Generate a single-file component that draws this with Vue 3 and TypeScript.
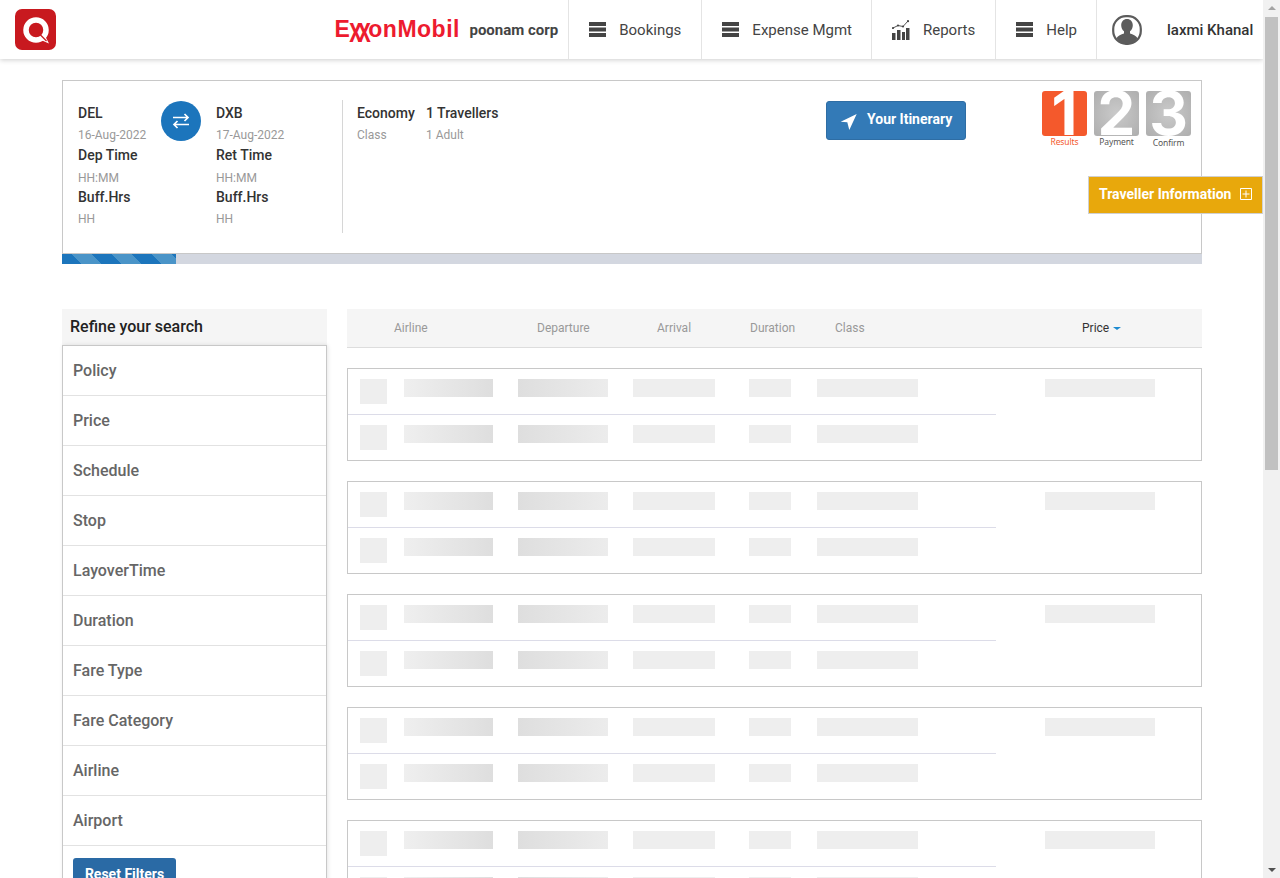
<script setup lang="ts">
interface NavItem {
  label: string;
  icon: 'bars' | 'chart';
}

const navItems: NavItem[] = [
  { label: 'Bookings', icon: 'bars' },
  { label: 'Expense Mgmt', icon: 'bars' },
  { label: 'Reports', icon: 'chart' },
  { label: 'Help', icon: 'bars' },
];

const legs = [
  { code: 'DEL', date: '16-Aug-2022', timeLabel: 'Dep Time' },
  { code: 'DXB', date: '17-Aug-2022', timeLabel: 'Ret Time' },
];

const steps = [
  { num: '1', label: 'Results', active: true },
  { num: '2', label: 'Payment', active: false },
  { num: '3', label: 'Confirm', active: false },
];

const filters = ['Policy', 'Price', 'Schedule', 'Stop', 'LayoverTime', 'Duration', 'Fare Type', 'Fare Category', 'Airline', 'Airport'];
const columns = ['Airline', 'Departure', 'Arrival', 'Duration', 'Class'];
const placeholders = [1, 2, 3, 4, 5];
</script>

<template>
  <div class="page">
    <header class="topbar">
      <svg class="brand" width="41" height="41" viewBox="0 0 41 41">
        <rect width="41" height="41" rx="7" fill="#c8191f" />
        <circle cx="21" cy="21" r="10" fill="none" stroke="#fff" stroke-width="5.5" />
        <path d="M23.500 30 L34 34.500 L28.500 24 Z" fill="#fff" />
        <path d="M23 23.500 L31.500 32" stroke="#c8191f" stroke-width="1.2" />
      </svg>
      <div class="corp">
        <span class="exxon">E<span class="xx">xx</span>onMobil</span>
        <span class="corp-name">poonam corp</span>
      </div>
      <nav class="nav">
        <a v-for="item in navItems" :key="item.label" class="nav-item">
          <svg v-if="item.icon === 'bars'" width="17" height="15" viewBox="0 0 17 15">
            <path d="M0 0h17v4H0zM0 5.500h17v4H0zM0 11h17v4H0z" fill="#444" />
          </svg>
          <svg v-else width="18" height="20" viewBox="0 0 18 20">
            <path d="M0 13h3.500v7H0zM5 10h3.500v10H5zM10 12h3v8h-3zM14 8h3.500v12H14z" fill="#444" />
            <path d="M1 8 L6 5.500 L11 6.500 L16 1" fill="none" stroke="#444" stroke-width="0.9" />
            <circle cx="1" cy="8" r="1.100" fill="#444" />
            <circle cx="6" cy="5.500" r="1.100" fill="#444" />
            <circle cx="11" cy="6.500" r="1.100" fill="#444" />
            <circle cx="16" cy="1.200" r="1.100" fill="#444" />
          </svg>
          <span>{{ item.label }}</span>
        </a>
        <div class="user">
          <svg width="30" height="30" viewBox="0 0 30 30">
            <rect x="1.200" y="1.200" width="27.600" height="27.600" rx="12.800" fill="none" stroke="#5c5c5c" stroke-width="2.200" />
            <path d="M15 4c-3.400 0-5.800 2.700-5.800 6.200 0 2.600 1.100 4.800 2.800 6v2.300c-3 1-6 1.900-7.500 4.600 1.500 3 5.500 6 10.500 6s9-3 10.500-6c-1.500-2.700-4.500-3.600-7.500-4.600v-2.300c1.700-1.200 2.800-3.400 2.800-6C20.800 6.700 18.400 4 15 4z" fill="#5c5c5c" />
          </svg>
          <span>laxmi Khanal</span>
        </div>
      </nav>
    </header>

    <main class="container">
      <section class="summary">
        <div class="route">
          <div v-for="leg in legs" :key="leg.code" class="leg">
            <div class="strong">{{ leg.code }}</div>
            <div class="muted">{{ leg.date }}</div>
            <div class="strong">{{ leg.timeLabel }}</div>
            <div class="muted">HH:MM</div>
            <div class="strong">Buff.Hrs</div>
            <div class="muted">HH</div>
          </div>
          <div class="swap">
            <svg width="18" height="16" viewBox="0 0 18 16">
              <path d="M1 4.500h15M12.500 1l3.500 3.500L12.500 8M17 11.500H2M5.500 8L2 11.500 5.500 15" fill="none" stroke="#fff" stroke-width="1.700" />
            </svg>
          </div>
        </div>
        <div class="pax">
          <div class="pax-col class-col">
            <div class="strong">Economy</div>
            <div class="muted">Class</div>
          </div>
          <div class="pax-col">
            <div class="strong">1 Travellers</div>
            <div class="muted">1 Adult</div>
          </div>
        </div>
        <button class="itinerary" type="button">
          <svg width="17" height="18" viewBox="0 0 17 18">
            <path d="M16.700 1 L.7 8.700 L7.300 9.300 L9.300 17 Z" fill="#fff" />
          </svg>
          <span>Your Itinerary</span>
        </button>
        <div class="steps">
          <div v-for="step in steps" :key="step.num" class="step" :class="{ active: step.active }">
            <div class="tile">{{ step.num }}</div>
            <div class="step-label">{{ step.label }}</div>
          </div>
        </div>
        <div class="traveller">
          <span>Traveller Information</span>
          <svg width="12" height="12" viewBox="0 0 12 12">
            <path d="M.5.5h11v11H.5zM6 2.500v7M2.500 6h7" fill="none" stroke="#fff" stroke-width="1" />
          </svg>
        </div>
      </section>
      <div class="progress"><div class="progress-fill"></div></div>

      <div class="content">
        <aside class="sidebar">
          <h2 class="refine">Refine your search</h2>
          <div class="filters">
            <div v-for="f in filters" :key="f" class="filter">{{ f }}</div>
            <div class="filter-foot">
              <button class="reset" type="button">Reset Filters</button>
            </div>
          </div>
        </aside>

        <section class="results">
          <div class="table-head">
            <span v-for="c in columns" :key="c" class="col" :class="'col-' + c.toLowerCase()">{{ c }}</span>
            <span class="col col-price">Price<i class="caret"></i></span>
          </div>
          <div v-for="card in placeholders" :key="card" class="card">
            <div class="legs">
              <div v-for="row in 2" :key="row" class="row">
                <div class="sk sk-logo"></div>
                <div class="sk sk-airline"></div>
                <div class="sk sk-dep"></div>
                <div class="sk sk-arr"></div>
                <div class="sk sk-dur"></div>
                <div class="sk sk-class"></div>
              </div>
            </div>
            <div class="sk sk-price"></div>
          </div>
        </section>
      </div>
    </main>

    <div class="scrollbar">
      <i class="arrow up"></i>
      <div class="thumb"></div>
      <i class="arrow down"></i>
    </div>
  </div>
</template>

<style>
html,
body {
  margin: 0;
  height: 100%;
  overflow: hidden;
  background: #fff;
}
</style>

<style scoped>
.page {
  position: relative;
  width: 1280px;
  height: 878px;
  overflow: hidden;
  font-family: Roboto, "Liberation Sans", sans-serif;
  color: #333;
}

.topbar {
  display: flex;
  align-items: center;
  width: 1263px;
  height: 59px;
  box-sizing: border-box;
  background: #fff;
  box-shadow: 0 1px 5px rgba(0, 0, 0, 0.2);
  position: relative;
}

.brand {
  margin-left: 15px;
  margin-bottom: 1px;
}

.corp {
  display: flex;
  align-items: center;
  margin-left: auto;
}

.exxon {
  font-family: "Liberation Sans", sans-serif;
  font-size: 23px;
  font-weight: 700;
  color: #ed1b2f;
  letter-spacing: 0.5px;
  width: 125px;
  margin-right: 10px;
  white-space: nowrap;
}

.xx {
  display: inline-block;
  width: 19px;
  margin-left: -1px;
  letter-spacing: -4px;
  transform: translateY(8px) scaleY(1.55);
  transform-origin: center bottom;
}

.corp-name {
  font-size: 15px;
  font-weight: 700;
  color: #444;
  margin-right: 10px;
}

.nav {
  display: flex;
  height: 59px;
}

.nav-item {
  display: flex;
  align-items: center;
  gap: 13px;
  padding: 0 20px;
  border-left: 1px solid #e4e4e4;
  font-size: 15px;
  color: #444;
}

.nav-item:nth-child(2),
.nav-item:nth-child(4) {
  padding-right: 19px;
}

.user {
  display: flex;
  align-items: center;
  gap: 25px;
  width: 167px;
  box-sizing: border-box;
  padding-left: 15px;
  border-left: 1px solid #e4e4e4;
  font-size: 15px;
  font-weight: 500;
  color: #333;
}

.container {
  width: 1140px;
  margin: 21px 0 0 62px;
}

.summary {
  position: relative;
  display: flex;
  align-items: flex-start;
  height: 174px;
  box-sizing: border-box;
  border: 1px solid #c8c8c8;
  padding: 19px 0 0 15px;
}

.route {
  position: relative;
  display: flex;
  flex: none;
  width: 265px;
  height: 133px;
  box-sizing: border-box;
  padding-top: 3px;
  border-right: 1px solid #d6d6d6;
}

.leg {
  flex: none;
  width: 126px;
}

.leg:first-child {
  width: 138px;
}

.swap {
  position: absolute;
  left: 83px;
  top: 1px;
  width: 40px;
  height: 40px;
  border-radius: 50%;
  background: #1c75bc;
  display: flex;
  align-items: center;
  justify-content: center;
}

.strong {
  font-size: 14px;
  font-weight: 500;
  line-height: 21px;
  color: #333;
  white-space: nowrap;
}

.muted {
  font-size: 12px;
  line-height: 22px;
  margin-bottom: -1px;
  color: #999;
  white-space: nowrap;
}

.leg .muted:nth-child(4) {
  line-height: 24px;
  margin-bottom: -3px;
}

.pax {
  display: flex;
  flex: none;
  width: 469px;
  margin-left: 14px;
  padding-top: 3px;
}

.class-col {
  width: 69px;
}

.itinerary {
  display: flex;
  flex: none;
  align-items: center;
  gap: 10px;
  width: 140px;
  height: 39px;
  margin-top: 1px;
  padding: 0 0 0 13px;
  border: 1px solid #2e6da4;
  border-radius: 3px;
  background: #337ab7;
  color: #fff;
  font-family: inherit;
  font-size: 14px;
  font-weight: 700;
}

.itinerary svg {
  margin-top: 3px;
}

.itinerary span {
  margin-top: -3px;
}

.steps {
  display: flex;
  gap: 7px;
  margin: -9px 0 0 76px;
}

.step {
  width: 45px;
  text-align: center;
}

.tile {
  width: 45px;
  height: 45px;
  border-radius: 3px;
  background: radial-gradient(circle, #cacaca 0%, #aeaeae 100%);
  color: #fff;
  font-family: Inter, sans-serif;
  font-size: 60px;
  font-weight: 700;
  line-height: 44px;
}

.step.active .tile {
  background: #f4592c;
}

.step-label {
  font-family: "Noto Sans", sans-serif;
  font-size: 8.5px;
  letter-spacing: -0.1px;
  line-height: 11px;
  color: #555;
  white-space: nowrap;
}

.step:last-child .step-label {
  padding-top: 1px;
}

.step.active .step-label {
  color: #f4592c;
}

.traveller {
  position: absolute;
  left: 1025px;
  top: 95px;
  display: flex;
  align-items: center;
  gap: 9px;
  width: 175px;
  height: 38px;
  box-sizing: border-box;
  padding: 0 0 2px 10px;
  border: 1px solid #d0d0d0;
  background: #e8a80c;
  color: #fff;
  font-size: 14px;
  font-weight: 700;
  white-space: nowrap;
}

.progress {
  height: 10px;
  background: #d3d7e0;
}

.progress-fill {
  width: 114px;
  height: 100%;
  background: repeating-linear-gradient(45deg, #1c75bc 0 14.14px, #4a94c8 14.14px 28.28px);
}

.content {
  display: flex;
  gap: 20px;
  margin-top: 45px;
}

.sidebar {
  width: 265px;
  flex: none;
}

.refine {
  margin: 0;
  height: 36px;
  padding-left: 8px;
  background: #f5f5f5;
  font-size: 16px;
  font-weight: 500;
  line-height: 36px;
  color: #222;
}

.filters {
  border: 1px solid #c8c8c8;
  box-shadow: 1px 0 4px rgba(0, 0, 0, 0.1);
}

.filter {
  height: 50px;
  box-sizing: border-box;
  padding-left: 10px;
  border-bottom: 1px solid #e2e2e2;
  font-size: 16px;
  font-weight: 500;
  line-height: 49px;
  color: #666;
}

.filter-foot {
  padding: 12px 10px;
}

.reset {
  width: 103px;
  height: 31px;
  padding: 0;
  border: 0;
  border-radius: 3px;
  background: #2a6aa5;
  color: #fff;
  font-family: inherit;
  font-size: 14px;
  font-weight: 700;
}

.results {
  flex: 1;
}

.table-head {
  position: relative;
  height: 39px;
  box-sizing: border-box;
  display: flex;
  align-items: center;
  background: #f5f5f5;
  border-bottom: 1px solid #ddd;
  margin-bottom: 20px;
  font-size: 12px;
  color: #999;
}

.col {
  white-space: nowrap;
}

.col-airline { margin-left: 47px; width: 143px; }
.col-departure { width: 120px; }
.col-arrival { width: 93px; }
.col-duration { width: 85px; }
.col-class { width: 247px; }

.col-price {
  color: #333;
}

.caret {
  display: inline-block;
  margin-left: 4px;
  vertical-align: middle;
  border-left: 4px solid transparent;
  border-right: 4px solid transparent;
  border-top: 3px solid #1c8ad0;
}

.card {
  display: flex;
  height: 93px;
  box-sizing: border-box;
  margin-bottom: 20px;
  border: 1px solid #c8c8c8;
}

.legs {
  width: 648px;
  flex: none;
}

.row {
  display: flex;
  align-items: flex-start;
  height: 46px;
  box-sizing: border-box;
  padding: 10px 0 0 12px;
}

.row:first-child {
  border-bottom: 1px solid #dcdce8;
}

.sk {
  height: 18px;
  flex: none;
  background: #eee;
}

.sk-logo { width: 27px; height: 25px; }
.sk-airline { width: 89px; margin-left: 17px; background: linear-gradient(to right, #efefef, #dedede); }
.sk-dep { width: 90px; margin-left: 25px; background: linear-gradient(to right, #dedede, #ececec); }
.sk-arr { width: 82px; margin-left: 25px; }
.sk-dur { width: 42px; margin-left: 34px; }
.sk-class { width: 101px; margin-left: 26px; }
.sk-price { width: 110px; margin: 10px 0 0 49px; }

.scrollbar {
  position: absolute;
  top: 0;
  right: 0;
  width: 17px;
  height: 878px;
  background: #f1f1f1;
}

.thumb {
  position: absolute;
  left: 2px;
  top: 17px;
  width: 13px;
  height: 453px;
  background: #c1c1c1;
}

.arrow {
  position: absolute;
  left: 5px;
  border-left: 4px solid transparent;
  border-right: 4px solid transparent;
}

.arrow.up {
  top: 6px;
  border-bottom: 4px solid #a3a3a3;
}

.arrow.down {
  bottom: 6px;
  border-top: 4px solid #505050;
}
</style>
